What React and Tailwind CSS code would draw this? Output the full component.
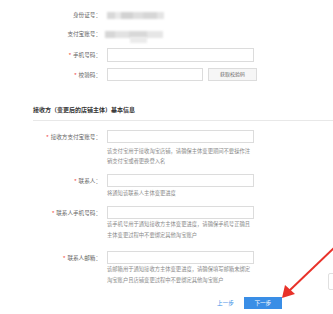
const FONT = { fontFamily: '"Liberation Sans", "Noto Sans CJK SC", sans-serif' };

function Label({ text, required }) {
  return (
    <div className="w-[101px] shrink-0 flex justify-end items-center text-[5.6px] text-[#666] leading-[10px]">
      {required && <span className="text-[#f04134] mr-[2px] text-[6px]">*</span>}
      <span>{text}</span>
    </div>
  );
}

function Input({ w = "w-[147px]", h = "h-[13px]" }) {
  return <div className={`${w} ${h} border border-[#dcdcdc] bg-white`} />;
}

function Help({ lines, lh = "leading-[10px]" }) {
  return (
    <div className={`ml-[107px] text-[5.3px] text-[#888] ${lh}`}>
      {lines.map((l) => (
        <div key={l}>{l}</div>
      ))}
    </div>
  );
}

export default function App() {
  return (
    <div className="relative w-[333px] h-[314px] bg-white overflow-hidden" style={FONT}>
      <div className="flex flex-col">
        <div className="mt-[10px] h-[10px] flex items-center">
          <Label text="身份证号：" />
          <div className="ml-[6px] flex h-[7px] w-[57px] blur-[0.8px]">
            <div className="w-[8px] bg-[#d8d8d8]" />
            <div className="w-[6px] bg-[#e8e8e8]" />
            <div className="w-[12px] bg-[#d2d2d2]" />
            <div className="w-[10px] bg-[#dedede]" />
            <div className="w-[14px] bg-[#d6d6d6]" />
            <div className="w-[7px] bg-[#e4e4e4]" />
          </div>
        </div>
        <div className="mt-[9px] h-[10px] flex items-center relative">
          <Label text="支付宝账号：" />
          <div className="ml-[4px] flex h-[7px] w-[58px] blur-[0.8px]">
            <div className="w-[10px] bg-[#d6d6d6]" />
            <div className="w-[14px] bg-[#e2e2e2]" />
            <div className="w-[18px] bg-[#d8d8d8]" />
            <div className="w-[16px] bg-[#e6e6e6]" />
          </div>
          <div className="absolute left-[130px] top-[8px] w-[17px] h-[6px] bg-[#ebebeb] blur-[1px]" />
        </div>
        <div className="mt-[9px] flex items-center">
          <Label text="手机号码：" required />
          <div className="ml-[6px]">
            <Input h="h-[14px]" />
          </div>
        </div>
        <div className="mt-[6px] flex items-center">
          <Label text="校验码：" required />
          <div className="ml-[6px] flex gap-[5px]">
            <Input w="w-[96px]" />
            <div className="w-[49px] h-[13px] border border-[#dcdcdc] bg-[#f6f6f6] flex items-center justify-center text-[5px] text-[#666]">
              获取校验码
            </div>
          </div>
        </div>

        <div className="mt-[24px] ml-[33px] leading-[10px] text-[6px] font-bold text-[#333]">
          接收方（变更后的店铺主体）基本信息
        </div>
        <div className="mt-[5px] ml-[33px] h-px bg-[#e8e8e8]" />

        <div className="mt-[9px] flex items-center">
          <Label text="接收方支付宝账号：" required />
          <div className="ml-[6px]">
            <Input />
          </div>
        </div>
        <div className="mt-[3px]">
          <Help lines={["该支付宝用于接收淘宝店铺，请确保主体变更期间不要操作注", "销支付宝或者更换登入名"]} />
        </div>

        <div className="mt-[8px] flex items-center">
          <Label text="联系人：" required />
          <div className="ml-[6px]">
            <Input />
          </div>
        </div>
        <div className="mt-[1px]">
          <Help lines={["将通知该联系人主体变更进度"]} />
        </div>

        <div className="mt-[8px] flex items-center">
          <Label text="联系人手机号码：" required />
          <div className="ml-[6px]">
            <Input />
          </div>
        </div>
        <Help
          lh="leading-[11px]"
          lines={["该手机号用于通知接收方主体变更进度，请确保手机号正确且", "主体变更过程中不要绑定其他淘宝账户"]}
        />

        <div className="mt-[10px] flex items-center">
          <Label text="联系人邮箱：" required />
          <div className="ml-[6px]">
            <Input />
          </div>
        </div>
        <Help
          lh="leading-[11px]"
          lines={["该邮箱用于通知接收方主体变更进度，请确保填写邮箱未绑定", "淘宝账户且店铺变更过程中不要绑定其他淘宝账户"]}
        />

        <div className="mt-[11px] flex items-center">
          <div className="ml-[217px] text-[5.6px] text-[#3a8ee6] leading-[12px]">上一步</div>
          <div className="ml-[10px] w-[38px] h-[12px] bg-[#3a8ee6] text-white text-[5.6px] flex items-center justify-center">
            下一步
          </div>
        </div>
      </div>

      <div className="absolute left-[328px] top-[273px] w-[10px] h-[17px] border border-[#e0e0e0] rounded-[2px]" />

      <svg className="absolute left-0 top-0" width="333" height="314" viewBox="0 0 333 314">
        <line x1="334" y1="248" x2="289" y2="291" stroke="#e8322a" strokeWidth="2" />
        <polygon points="282,298 285,285 295,294" fill="#e8322a" />
      </svg>
    </div>
  );
}
